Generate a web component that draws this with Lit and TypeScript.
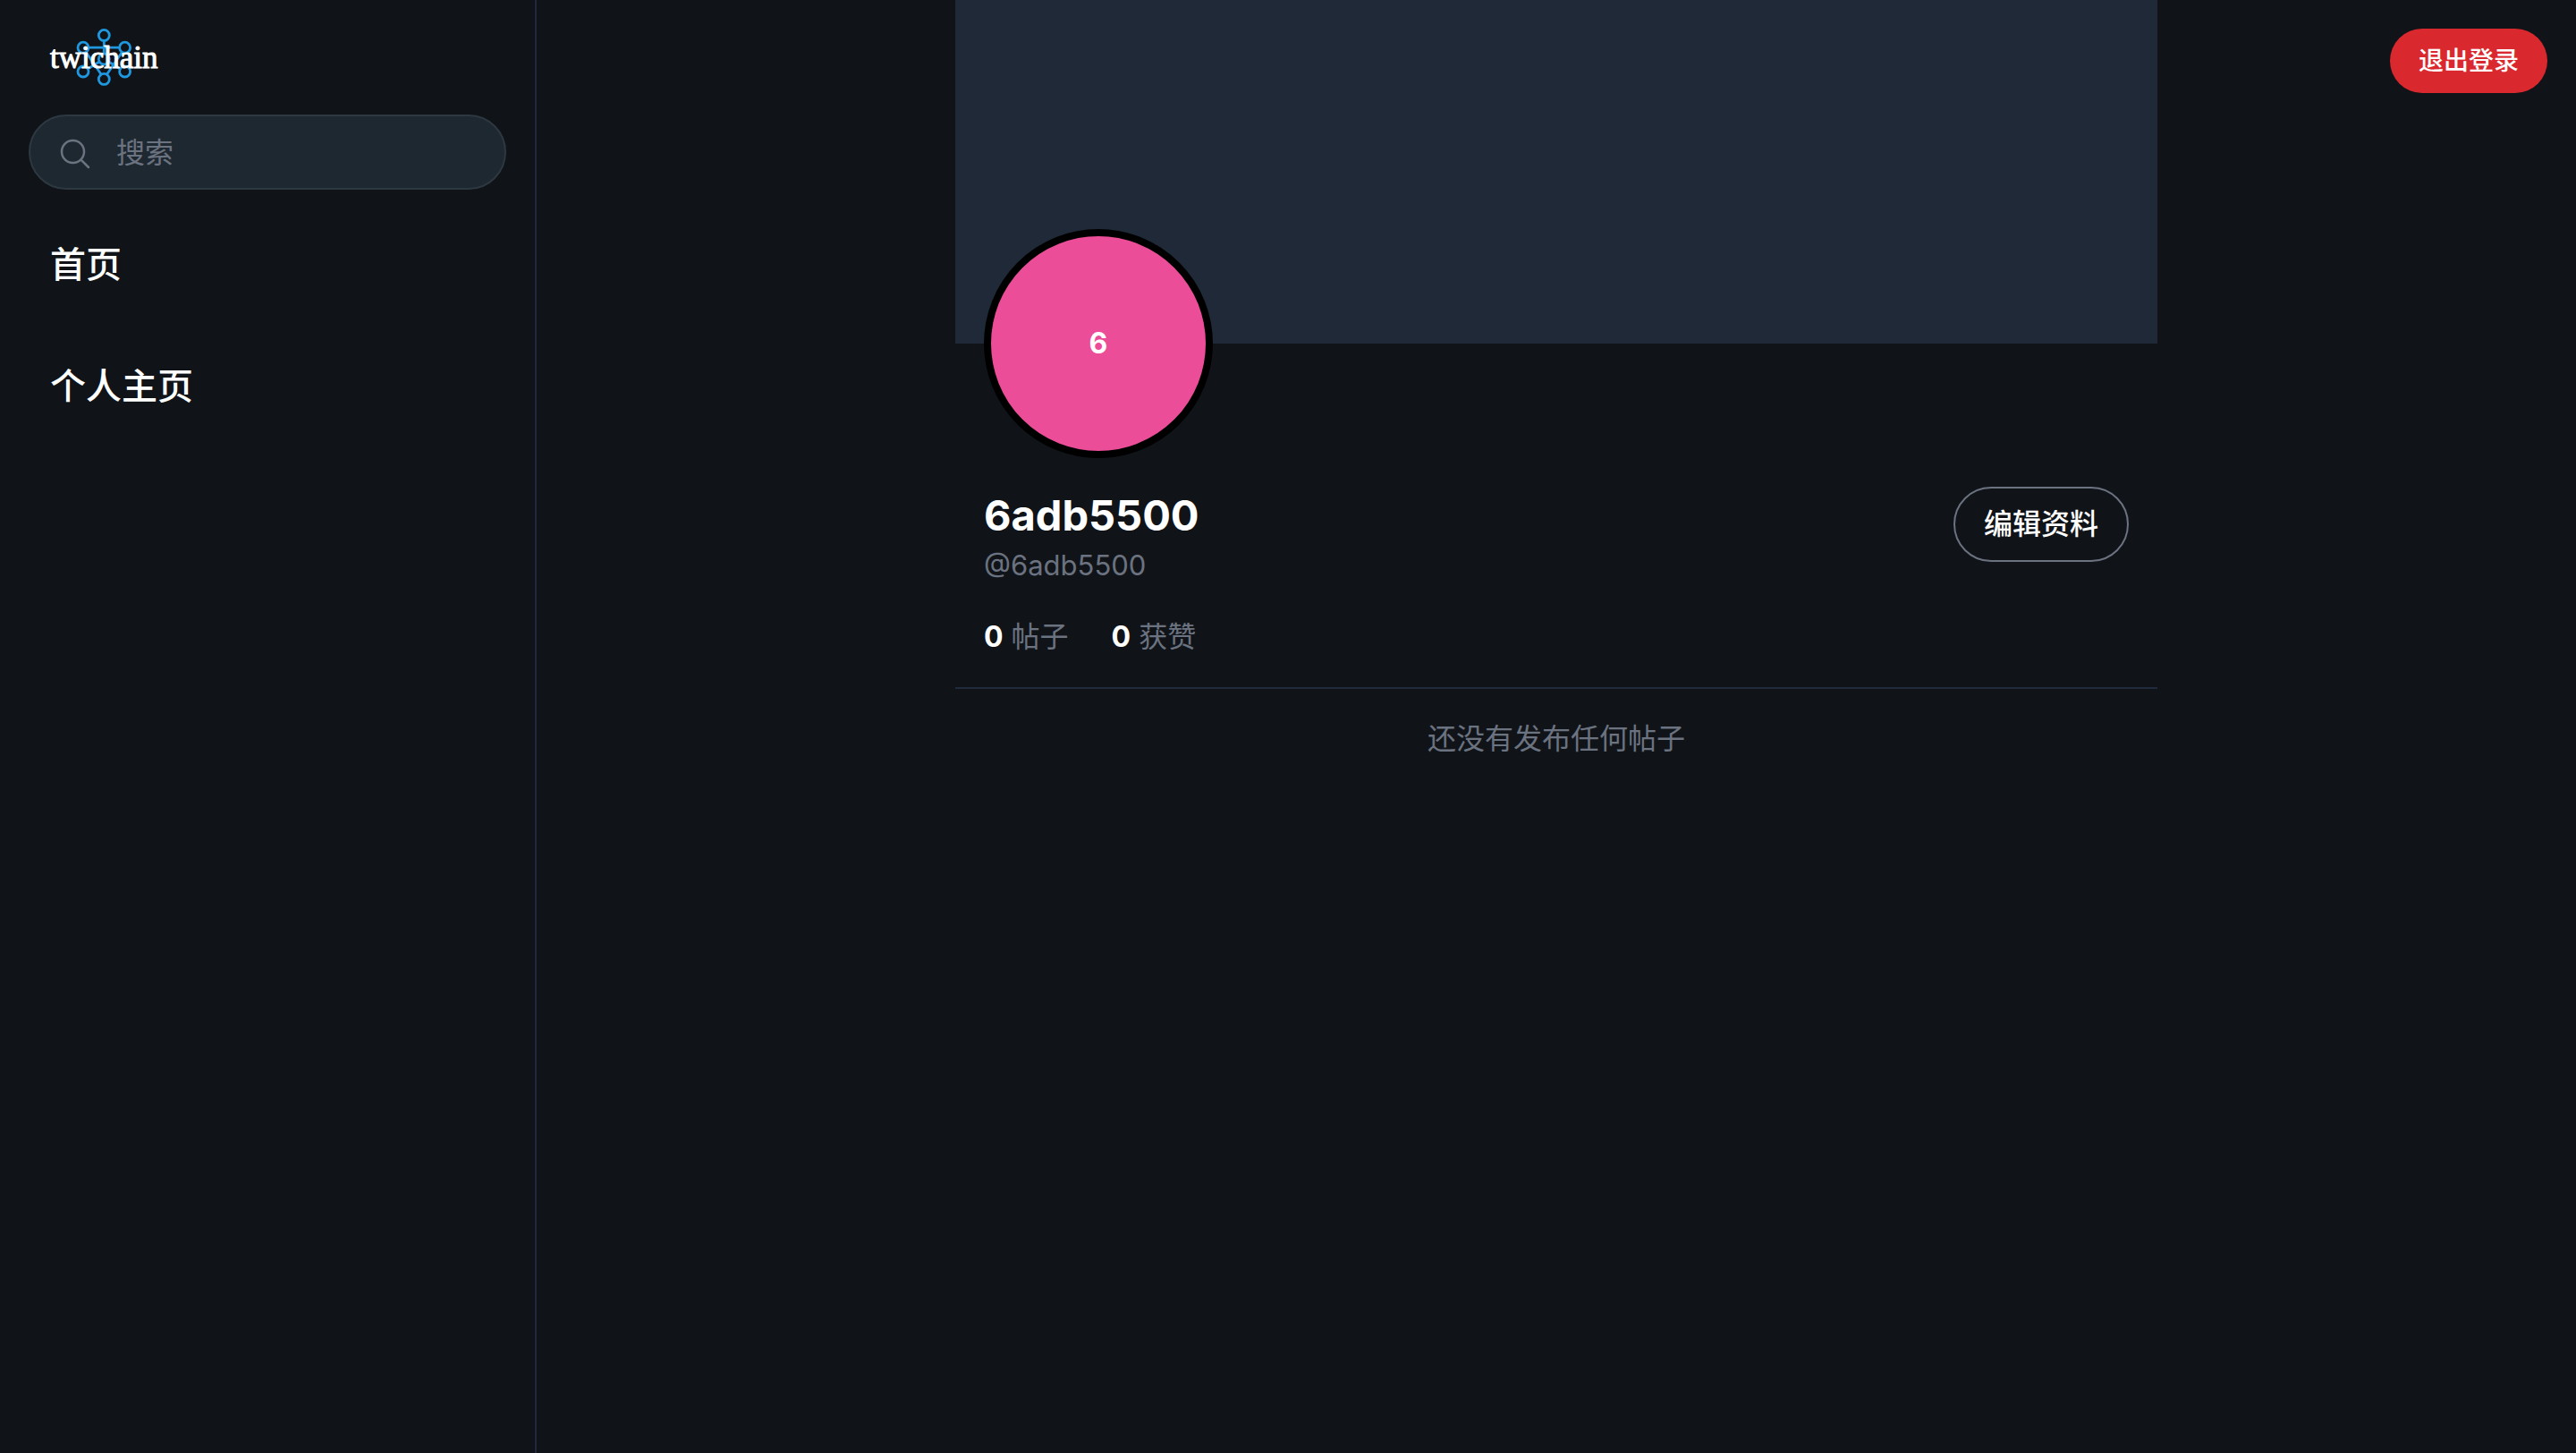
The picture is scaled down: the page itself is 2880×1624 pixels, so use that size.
import { LitElement, html, css } from "lit";
import { customElement, property, state } from "lit/decorators.js";

const controls = css`
  :host {
    display: block;
    box-sizing: border-box;
  }
  *,
  *::before,
  *::after {
    box-sizing: border-box;
  }
  a {
    color: inherit;
    text-decoration: none;
  }
  button,
  input {
    margin: 0;
    font-family: inherit;
    color: inherit;
  }
  button {
    cursor: pointer;
  }
`;

@customElement("twichain-logo")
export class TwichainLogo extends LitElement {
  static styles = css`
    :host {
      display: block;
    }
    .mark {
      display: block;
      width: 120px;
      height: 64px;
      overflow: visible;
    }
    .word {
      font-family: "Liberation Serif", serif;
      font-size: 35px;
      fill: #ffffff;
      stroke: #ffffff;
      stroke-width: 1;
    }
  `;

  render() {
    return html`
      <svg class="mark" viewBox="0 0 120 64" role="img" aria-label="twichain">
        <g fill="none" stroke="#1f98e0" stroke-width="2.8">
          <circle cx="60.3" cy="7.4" r="6" />
          <circle cx="37" cy="21.2" r="6" />
          <circle cx="83.6" cy="21.2" r="6" />
          <circle cx="37" cy="48" r="6" />
          <circle cx="83.6" cy="48" r="6" />
          <circle cx="60.3" cy="56.4" r="6" />
          <circle cx="60.3" cy="34" r="6" />
          <path
            d="M43 21.2H77.6M60.3 13.4V28M42.2 45L55.1 37M78.4 45L65.5 37M40.1 26.3L57.2 51.2M80.5 26.3L63.4 51.2"
          />
        </g>
        <text class="word" x="0" y="44">twichain</text>
      </svg>
    `;
  }
}

@customElement("side-bar")
export class SideBar extends LitElement {
  static styles = [
    controls,
    css`
      :host {
        padding: 32px;
        border-right: 2px solid #1f2a3d;
      }
      .stack {
        display: flex;
        flex-direction: column;
        gap: 32px;
      }
      .brand {
        align-self: flex-start;
        padding: 0 24px;
      }
      .search {
        position: relative;
        display: block;
      }
      .icon {
        position: absolute;
        top: 24px;
        left: 32px;
        width: 40px;
        height: 40px;
        color: #6b7280;
        pointer-events: none;
      }
      .field {
        display: block;
        width: 100%;
        height: 84px;
        padding: 16px 32px 16px 96px;
        border: 2px solid #2d3840;
        border-radius: 42px;
        outline: none;
        background: #1e2831;
        font-size: 32px;
        line-height: 48px;
      }
      .field::placeholder {
        color: #6b7280;
        opacity: 1;
      }
      .nav {
        display: flex;
        flex-direction: column;
        align-items: flex-start;
        gap: 32px;
      }
      .link {
        padding: 24px;
        font-size: 40px;
        line-height: 56px;
        font-weight: 500;
      }
    `,
  ];

  @state() private query = "";

  private links = [
    { label: "首页", href: "#home" },
    { label: "个人主页", href: "#profile" },
  ];

  render() {
    return html`
      <div class="stack">
        <a class="brand" href="#home"><twichain-logo></twichain-logo></a>
        <div class="search">
          <input
            class="field"
            type="search"
            placeholder="搜索"
            aria-label="搜索"
            .value=${this.query}
            @input=${(e: Event) => (this.query = (e.target as HTMLInputElement).value)}
          />
          <svg
            class="icon"
            viewBox="0 0 24 24"
            fill="none"
            stroke="currentColor"
            stroke-width="1.5"
            stroke-linecap="round"
            stroke-linejoin="round"
            aria-hidden="true"
          >
            <path
              d="m21 21-5.197-5.197m0 0A7.5 7.5 0 1 0 5.196 5.196a7.5 7.5 0 0 0 10.607 10.607Z"
            />
          </svg>
        </div>
        <nav class="nav">
          ${this.links.map((l) => html`<a class="link" href=${l.href}>${l.label}</a>`)}
        </nav>
      </div>
    `;
  }
}

@customElement("user-profile")
export class UserProfile extends LitElement {
  static styles = [
    controls,
    css`
      :host {
        width: 100%;
        max-width: 1344px;
        font-size: 32px;
        line-height: 48px;
      }
      .banner {
        height: 384px;
        background: #1f2937;
      }
      .avatar {
        position: relative;
        display: flex;
        align-items: center;
        justify-content: center;
        width: 256px;
        height: 256px;
        margin: -128px 0 0 32px;
        border: 8px solid #000000;
        border-radius: 50%;
        background: #eb4d98;
        font-weight: 700;
      }
      .details {
        display: flex;
        flex-direction: column;
        gap: 32px;
        padding: 32px;
        border-bottom: 2px solid #1f2a3d;
      }
      .top {
        display: flex;
        align-items: flex-start;
        justify-content: space-between;
      }
      .name {
        margin: 0;
        font-size: 47px;
        line-height: 64px;
        font-weight: 700;
      }
      .handle,
      .stats,
      .empty {
        margin: 0;
        color: #6b7280;
      }
      .handle {
        font-size: 31px;
      }
      .edit {
        padding: 16px 32px;
        border: 2px solid #6b7280;
        border-radius: 42px;
        background: transparent;
        font-size: 32px;
        line-height: 48px;
        font-weight: 500;
      }
      .stats {
        display: flex;
        gap: 48px;
      }
      .count {
        color: #ffffff;
        font-weight: 700;
      }
      .empty {
        padding: 32px;
        text-align: center;
      }
    `,
  ];

  @property() name = "";
  @property({ type: Number }) posts = 0;
  @property({ type: Number }) likes = 0;

  render() {
    return html`
      <div class="banner"></div>
      <div class="avatar">${this.name.charAt(0)}</div>
      <div class="details">
        <div class="top">
          <div>
            <h1 class="name">${this.name}</h1>
            <p class="handle">@${this.name}</p>
          </div>
          <button class="edit" type="button">编辑资料</button>
        </div>
        <div class="stats">
          <span><span class="count">${this.posts}</span> 帖子</span>
          <span><span class="count">${this.likes}</span> 获赞</span>
        </div>
      </div>
      <p class="empty">还没有发布任何帖子</p>
    `;
  }
}

@customElement("app-root")
export class AppRoot extends LitElement {
  static styles = [
    controls,
    css`
      :host {
        position: relative;
        display: grid;
        grid-template-columns: 600px minmax(0, 1fr);
        min-height: 100vh;
        background: #101418;
        color: #ffffff;
        font-family: Inter, "Noto Sans CJK SC", sans-serif;
      }
      .main {
        display: flex;
        justify-content: center;
        align-items: flex-start;
      }
      .logout {
        position: absolute;
        top: 32px;
        right: 32px;
        padding: 16px 32px;
        border: 0;
        border-radius: 36px;
        background: #da292e;
        font-size: 28px;
        line-height: 40px;
        font-weight: 500;
      }
    `,
  ];

  render() {
    return html`
      <side-bar></side-bar>
      <main class="main">
        <user-profile name="6adb5500" posts="0" likes="0"></user-profile>
      </main>
      <button class="logout" type="button">退出登录</button>
    `;
  }
}
